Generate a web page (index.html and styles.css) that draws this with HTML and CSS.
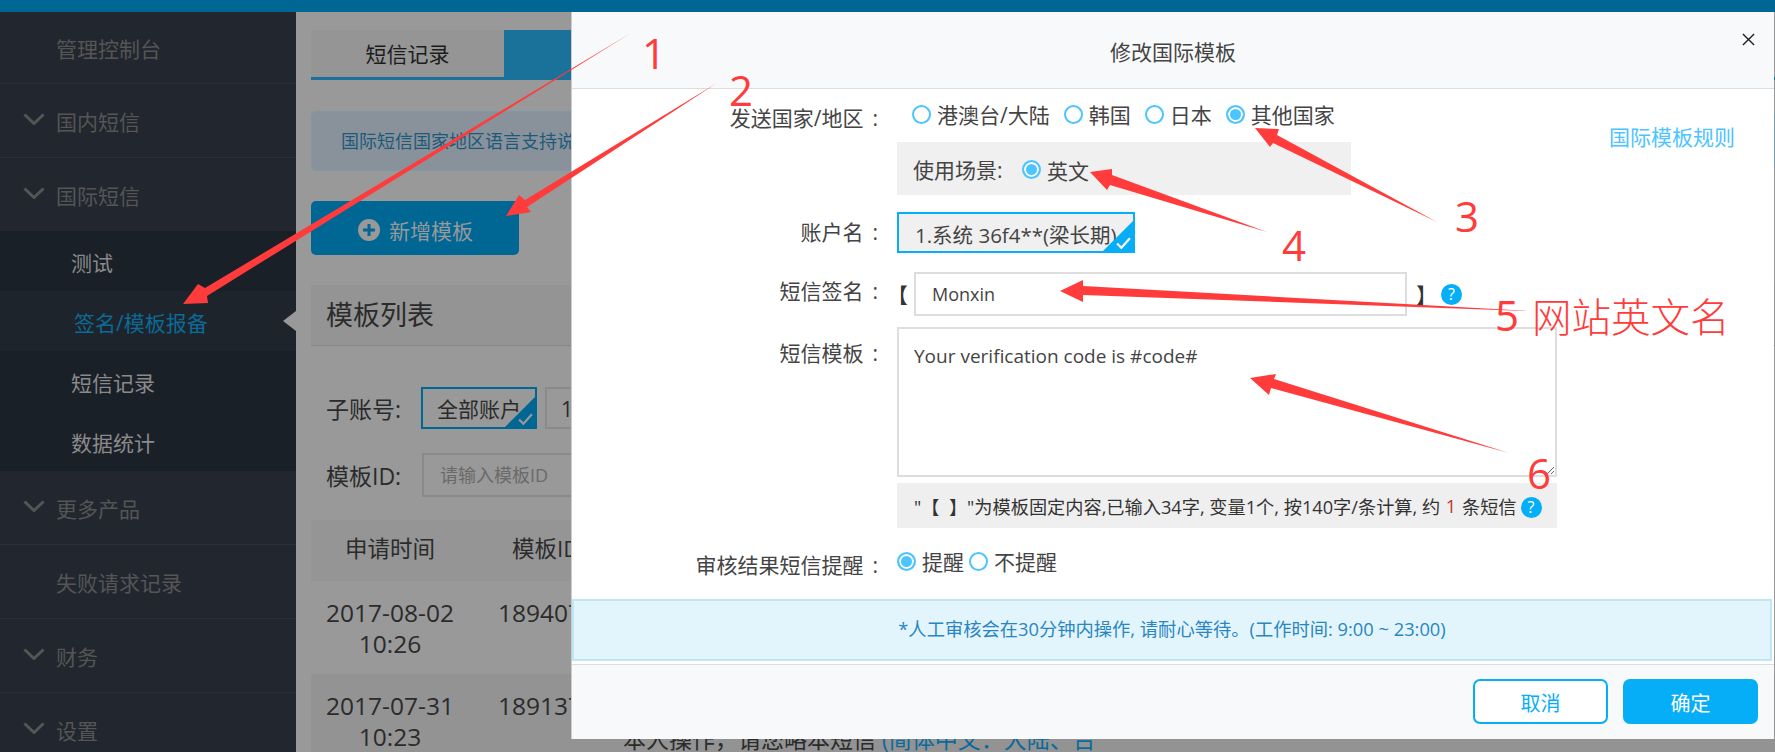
FILE: index.html
```html
<!DOCTYPE html>
<html>
<head>
  <meta charset="utf-8">
  <title>修改国际模板</title>
  <link rel="stylesheet" href="styles.css">
</head>
<body>
  <div class="topbar"></div>
  <div class="main">
    <div class="sidebar">
      <div class="nav-row plain first">管理控制台</div>
      <div class="nav-row"><svg class="chev" viewBox="0 0 22 12"><path d="M1.5 1.5L11 10.5L20.5 1.5"/></svg>国内短信</div>
      <div class="nav-row"><svg class="chev" viewBox="0 0 22 12"><path d="M1.5 1.5L11 10.5L20.5 1.5"/></svg>国际短信</div>
      <div class="sub-nav">
        <div class="sub-row">测试</div>
        <div class="sub-row active">签名/模板报备</div>
        <div class="sub-row">短信记录</div>
        <div class="sub-row">数据统计</div>
      </div>
      <div class="nav-row"><svg class="chev" viewBox="0 0 22 12"><path d="M1.5 1.5L11 10.5L20.5 1.5"/></svg>更多产品</div>
      <div class="nav-row plain">失败请求记录</div>
      <div class="nav-row"><svg class="chev" viewBox="0 0 22 12"><path d="M1.5 1.5L11 10.5L20.5 1.5"/></svg>财务</div>
      <div class="nav-row"><svg class="chev" viewBox="0 0 22 12"><path d="M1.5 1.5L11 10.5L20.5 1.5"/></svg>设置</div>
    </div>

    <div class="content">
      <div class="tabs">
        <div class="tab">短信记录</div>
        <div class="tab current">模板报备</div>
      </div>
      <div class="info">国际短信国家地区语言支持说明</div>
      <div class="add-btn">
        <svg class="plus" viewBox="0 0 22 22"><circle cx="11" cy="11" r="11"/><path d="M11 5V17M5 11H17"/></svg>
        新增模板
      </div>
      <div class="panel-title">模板列表</div>
      <div class="filter first">
        <span class="filter-label">子账号:</span>
        <span class="chip on">全部账户<span class="corner dark"><svg viewBox="0 0 14 11"><path d="M1 6L5 10L13 1"/></svg></span></span>
        <span class="chip">1.系统 36f4**</span>
      </div>
      <div class="filter">
        <span class="filter-label">模板ID:</span>
        <input class="id-input" type="text" placeholder="请输入模板ID">
      </div>
      <div class="thead">
        <div class="col-date">申请时间</div>
        <div class="col-id">模板ID</div>
      </div>
      <div class="trow">
        <div class="col-date">2017-08-02<br>10:26</div>
        <div class="col-id">1894071</div>
      </div>
      <div class="trow alt">
        <div class="col-date">2017-07-31<br>10:23</div>
        <div class="col-id">1891371</div>
        <div class="col-note">本人操作，请您略本短信 <span class="note-link">(简体中文：大陆、台</span></div>
      </div>
    </div>
  </div>

  <!-- 弹窗 -->
  <div class="modal">
    <div class="modal-head">
      修改国际模板
      <svg class="close" viewBox="0 0 14 14"><path d="M1 1L13 13M13 1L1 13"/></svg>
    </div>
    <div class="modal-body">
      <div class="form-col">
        <div class="form-row country">
          <div class="form-label">发送国家/地区<span class="colon">:</span></div>
          <div class="radios">
            <span class="radio"></span><span class="radio-text">港澳台/大陆</span>
            <span class="radio"></span><span class="radio-text">韩国</span>
            <span class="radio"></span><span class="radio-text">日本</span>
            <span class="radio checked"></span><span class="radio-text">其他国家</span>
          </div>
        </div>
        <div class="form-row scene-row">
          <div class="form-label"></div>
          <div class="scene">
            <span class="scene-label">使用场景:</span>
            <span class="radio checked"></span><span class="radio-text">英文</span>
          </div>
        </div>
        <div class="form-row account-row">
          <div class="form-label">账户名<span class="colon">:</span></div>
          <div class="account">1.系统 36f4**(梁长期)<span class="corner"><svg viewBox="0 0 14 11"><path d="M1 6L5 10L13 1"/></svg></span></div>
        </div>
        <div class="form-row sign-row">
          <div class="form-label">短信签名<span class="colon">:</span></div>
          <span class="bracket">【</span>
          <input class="sign-input" type="text" value="Monxin">
          <span class="bracket right">】</span>
          <span class="help">?</span>
        </div>
        <div class="form-row tpl-row">
          <div class="form-label">短信模板<span class="colon">:</span></div>
          <textarea class="tpl-input" readonly>Your verification code is #code#</textarea>
        </div>
        <div class="form-row hint-row">
          <div class="form-label"></div>
          <div class="hint">"【  】"为模板固定内容,已输入34字, 变量1个, 按140字/条计算, 约 <em>1</em> 条短信<span class="help small">?</span></div>
        </div>
        <div class="form-row remind-row">
          <div class="form-label">审核结果短信提醒<span class="colon">:</span></div>
          <div class="radios tight">
            <span class="radio checked"></span><span class="radio-text">提醒</span>
            <span class="radio"></span><span class="radio-text">不提醒</span>
          </div>
        </div>
      </div>
      <a class="rules">国际模板规则</a>
    </div>
    <div class="notice">*人工审核会在30分钟内操作, 请耐心等待。(工作时间: 9:00 ~ 23:00)</div>
    <div class="modal-foot">
      <div class="btn ghost">取消</div>
      <div class="btn solid">确定</div>
    </div>
  </div>

  <!-- 红色标注 -->
  <svg class="marks" viewBox="0 0 1775 752">
    <polygon points="183,304 198,284 205,288 631,33 207,296 208,303"/>
    <polygon points="506,216 519,195 525,200 717,83 527,207 531,212"/>
    <polygon points="1255,128 1279,129 1277,135 1437,222 1273,143 1270,147"/>
    <polygon points="1090,172 1112,169 1112,175 1267,232 1110,185 1107,190"/>
    <polygon points="1060,291 1083,280 1083,286 1529,311 1083,295 1083,302"/>
    <polygon points="1250,378 1276,374 1274,379 1509,453 1271,388 1269,395"/>
  </svg>
  <span class="mark m1">1</span>
  <span class="mark m2">2</span>
  <span class="mark m3">3</span>
  <span class="mark m4">4</span>
  <span class="mark m5">5</span>
  <span class="mark m5b">网站英文名</span>
  <span class="mark m6">6</span>
</body>
</html>
```

FILE: styles.css
```css
body {
  margin: 0;
  width: 1775px;
  height: 752px;
  overflow: hidden;
  position: relative;
  background-color: #999999;
  font-family: "Open Sans", "Noto Sans CJK SC", sans-serif;
  font-size: 21px;
  color: #444444;
}

.topbar {
  height: 12px;
  background-color: #006794;
}

.main {
  display: flex;
  height: 740px;
}

/* 左侧菜单 */
.sidebar {
  width: 296px;
  flex: none;
  background-color: #22272f;
  color: #555555;
  font-size: 21px;
}

.nav-row {
  height: 73px;
  border-bottom: 1px solid #2a2f38;
  display: flex;
  align-items: center;
  padding-left: 23px;
}

.nav-row.plain {
  padding-left: 56px;
}

.nav-row.first {
  height: 71px;
}

.chev {
  width: 22px;
  height: 12px;
  margin-right: 11px;
  margin-top: -4px;
  fill: none;
  stroke: #555555;
  stroke-width: 3;
}

.sub-nav {
  background-color: #1a2028;
  margin-top: -1px;
}

.sub-row {
  height: 60px;
  line-height: 64px;
  padding-left: 71px;
  color: #8a8a8a;
  position: relative;
}

.sub-row.active {
  background-color: #1e242c;
  color: #0c6a96;
  padding-left: 74px;
}

.sub-row.active::after {
  content: "";
  position: absolute;
  right: 0;
  top: 20px;
  border-top: 10px solid transparent;
  border-bottom: 10px solid transparent;
  border-right: 13px solid #999999;
}

/* 内容区 */
.content {
  flex: 1;
  padding: 18px 0 0 15px;
  color: #2b2b2b;
  font-size: 21px;
  overflow: hidden;
}

.tabs {
  display: flex;
  height: 50px;
  border-bottom: 3px solid #1a7199;
  box-sizing: border-box;
}

.tab {
  width: 193px;
  text-align: center;
  line-height: 49px;
  background-color: #959595;
  color: #1c1c1c;
}

.tab.current {
  background-color: #1a7199;
  color: #9a9a9a;
  width: 400px;
}

.info {
  margin-top: 31px;
  height: 60px;
  line-height: 58px;
  box-sizing: border-box;
  padding-left: 29px;
  background-color: #89929a;
  border: 1px solid #7f98a6;
  border-radius: 5px;
  color: #1d5a7a;
  font-size: 18px;
}

.add-btn {
  margin-top: 30px;
  width: 208px;
  height: 54px;
  background-color: #006794;
  border-radius: 5px;
  color: #999999;
  display: flex;
  align-items: center;
  padding: 3px 0 0 47px;
  box-sizing: border-box;
  gap: 9px;
}

.plus {
  width: 22px;
  height: 22px;
}

.plus circle {
  fill: #999999;
}

.plus path {
  stroke: #006794;
  stroke-width: 3;
}

.panel-title {
  margin-top: 30px;
  height: 61px;
  line-height: 60px;
  box-sizing: border-box;
  padding-left: 15px;
  background-color: #949494;
  border-bottom: 1px solid #858585;
  font-size: 27px;
}

.filter {
  display: flex;
  align-items: center;
  height: 44px;
  margin-top: 24px;
  padding-left: 15px;
}

.filter.first {
  height: 42px;
  margin-top: 41px;
}

.filter-label {
  width: 95px;
  flex: none;
  font-size: 23px;
}

.chip {
  height: 42px;
  line-height: 41px;
  width: 116px;
  flex: none;
  box-sizing: border-box;
  border: 2px solid #8a8a8a;
  padding-left: 14px;
  margin-right: 8px;
  font-size: 21px;
  position: relative;
  overflow: hidden;
  white-space: nowrap;
}

.chip.on {
  border-color: #006794;
}

.corner {
  position: absolute;
  right: 0;
  bottom: 0;
  width: 0;
  height: 0;
  border-style: solid;
  border-width: 0 0 30px 30px;
  border-color: transparent transparent #06aef8 transparent;
}

.corner.dark {
  border-bottom-color: #006794;
}

.corner svg {
  position: absolute;
  right: 2px;
  bottom: -28px;
  width: 15px;
  height: 12px;
  fill: none;
  stroke: #ffffff;
  stroke-width: 2;
}

.corner.dark svg {
  stroke: #999999;
}

.id-input {
  width: 300px;
  height: 44px;
  box-sizing: border-box;
  margin-left: 1px;
  padding: 0 16px;
  background: #999999;
  border: 2px solid #8a8a8a;
  font-family: inherit;
  font-size: 18px;
}

.id-input::placeholder {
  color: #6a6a6a;
}

.thead,
.trow {
  display: flex;
}

.thead {
  margin-top: 23px;
  height: 61px;
  line-height: 58px;
  background-color: #959595;
  font-size: 22.5px;
}

.trow {
  height: 93px;
  padding-top: 16px;
  box-sizing: border-box;
  line-height: 31px;
  font-size: 24.5px;
  white-space: nowrap;
  position: relative;
}

.trow.alt {
  background-color: #939393;
}

.col-date {
  width: 158px;
  text-align: center;
  flex: none;
}

.col-id {
  width: 120px;
  flex: none;
  padding-left: 29px;
}

.thead .col-id {
  padding-left: 43px;
}

.col-note {
  position: absolute;
  left: 312px;
  top: 50px;
  font-size: 23px;
}

.note-link {
  color: #0b6a9b;
}

/* 弹窗 */
.modal {
  position: absolute;
  left: 571px;
  top: 12px;
  width: 1203px;
  height: 727px;
  display: flex;
  flex-direction: column;
  background-color: #ffffff;
  border-left: 1px solid #cccccc;
  box-sizing: border-box;
}

.modal-head {
  height: 77px;
  flex: none;
  box-sizing: border-box;
  background-color: #f8f9fb;
  border-bottom: 1px solid #dddddd;
  text-align: center;
  line-height: 80px;
  font-size: 21px;
  color: #444444;
  position: relative;
}

.close {
  position: absolute;
  right: 19px;
  top: 21px;
  width: 13px;
  height: 13px;
  fill: none;
  stroke: #222222;
  stroke-width: 1.5;
}

.modal-body {
  flex: 1;
  display: flex;
  justify-content: space-between;
}

.form-col {
  padding-top: 12px;
}

.form-row {
  display: flex;
  align-items: center;
}

.form-label {
  width: 306px;
  flex: none;
  text-align: right;
  margin-right: 19px;
  white-space: nowrap;
}

.colon {
  margin-left: 9px;
}

.country {
  height: 32px;
}

.radios {
  display: flex;
  align-items: center;
  margin-left: 15px;
  margin-top: -7px;
}

.radios.tight {
  margin-left: 0;
}

.radio {
  width: 19px;
  height: 19px;
  flex: none;
  box-sizing: border-box;
  border: 2px solid #4cc4ff;
  border-radius: 50%;
  margin-right: 6px;
  margin-top: 2px;
}

.radio.checked {
  background-color: #4cc4ff;
  box-shadow: inset 0 0 0 2px #ffffff;
}

.radio-text {
  margin-right: 14px;
  white-space: nowrap;
}

.tight .radio-text {
  margin-right: 5px;
}

.scene-row {
  margin-top: 9px;
}

.scene {
  width: 454px;
  height: 53px;
  background-color: #f0f0f0;
  display: flex;
  align-items: center;
  padding-left: 16px;
  box-sizing: border-box;
}

.scene-label {
  width: 109px;
  flex: none;
}

.scene .radio-text {
  margin-top: 3px;
}

.account-row {
  margin-top: 17px;
}

.account-row .form-label {
  margin-bottom: 4px;
}

.account {
  width: 238px;
  height: 41px;
  line-height: 42px;
  box-sizing: border-box;
  border: 2px solid #06aef8;
  background-color: #f0f0f0;
  padding-left: 16px;
  font-size: 20.5px;
  white-space: nowrap;
  position: relative;
  overflow: hidden;
}

.sign-row {
  margin-top: 19px;
}

.sign-row .form-label {
  margin-bottom: 8px;
}

.bracket {
  width: 27px;
  margin-left: -10px;
  flex: none;
  color: #333333;
}

.bracket.right {
  width: 25px;
  margin-left: 9px;
}

.sign-input {
  width: 493px;
  height: 44px;
  box-sizing: border-box;
  border: 2px solid #dddddd;
  padding: 0 16px;
  font-family: inherit;
  font-size: 18px;
  color: #444444;
  outline: none;
}

.help {
  width: 21px;
  height: 21px;
  flex: none;
  border-radius: 50%;
  background-color: #06aef8;
  color: #ffffff;
  font-size: 16px;
  line-height: 21px;
  text-align: center;
}

.tpl-row {
  margin-top: 11px;
  align-items: flex-start;
}

.tpl-row .form-label {
  margin-top: 10px;
}

.tpl-input {
  width: 660px;
  height: 150px;
  box-sizing: border-box;
  border: 2px solid #dddddd;
  padding: 14px 15px;
  font-family: inherit;
  font-size: 19px;
  color: #444444;
  outline: none;
  display: block;
}

.hint-row {
  margin-top: 6px;
}

.hint {
  width: 660px;
  height: 45px;
  box-sizing: border-box;
  background-color: #efefef;
  padding-left: 17px;
  display: flex;
  align-items: center;
  font-size: 18.2px;
  color: #333333;
  white-space: pre;
}

.hint em {
  font-style: normal;
  color: #c0392b;
  margin: 0 1px;
}

.help.small {
  margin-left: 4px;
  margin-top: 3px;
}

.remind-row {
  height: 32px;
  margin-top: 20px;
}

.rules {
  margin: 34px 39px 0 0;
  color: #4cc4ff;
  line-height: 28px;
}

.notice {
  height: 62px;
  flex: none;
  box-sizing: border-box;
  margin: 0 2px 3px 0;
  background-color: #e2f5fd;
  border: 2px solid #bfe6f3;
  text-align: center;
  line-height: 56px;
  font-size: 18.3px;
  color: #2a85c0;
}

.modal-foot {
  height: 75px;
  flex: none;
  box-sizing: border-box;
  background-color: #f8f9fb;
  border-top: 1px solid #dddddd;
  display: flex;
  justify-content: flex-end;
  gap: 15px;
  padding: 14px 16px 0 0;
}

.btn {
  width: 135px;
  height: 45px;
  box-sizing: border-box;
  border-radius: 7px;
  text-align: center;
  line-height: 45px;
  font-size: 20px;
  border: 2px solid #06aef8;
}

.btn.ghost {
  background-color: #ffffff;
  color: #06aef8;
}

.btn.solid {
  background-color: #06aef8;
  color: #ffffff;
}

/* 标注 */
.marks {
  position: absolute;
  left: 0;
  top: 0;
  width: 1775px;
  height: 752px;
  fill: #ff3b3b;
}

.mark {
  position: absolute;
  color: #ff3b3b;
  font-size: 42px;
  line-height: 42px;
}

.m1 { left: 642px; top: 32px; }
.m2 { left: 729px; top: 69px; }
.m3 { left: 1455px; top: 195px; }
.m4 { left: 1282px; top: 224px; }
.m5 { left: 1495px; top: 294px; }
.m5b { left: 1532px; top: 296px; font-size: 39.5px; font-weight: 300; }
.m6 { left: 1527px; top: 452px; }
```
